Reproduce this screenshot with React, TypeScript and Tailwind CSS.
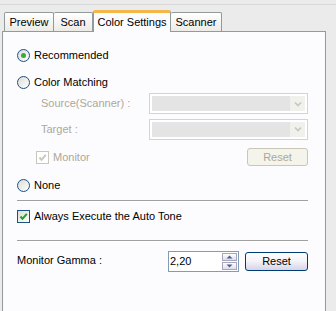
import React from "react";

function Radio({ checked, label }: { checked?: boolean; label: string }) {
  return (
    <div className="flex items-center h-[16px]">
      <span className="w-[13px] h-[13px] rounded-full border border-[#1c5180] bg-gradient-to-br from-[#dcdcd6] to-white flex items-center justify-center">
        {checked && <span className="w-[5px] h-[5px] rounded-full bg-[#3ea83e]" />}
      </span>
      <span className="ml-[4px] text-black">{label}</span>
    </div>
  );
}

function Check({ disabled, label }: { disabled?: boolean; label: string }) {
  return (
    <div className="flex items-center h-[16px]">
      <span
        className={
          disabled
            ? "w-[13px] h-[13px] border border-[#cac8bb] bg-white flex items-center justify-center"
            : "w-[13px] h-[13px] border border-[#1c5180] bg-gradient-to-br from-[#dcdcd6] to-white flex items-center justify-center"
        }
      >
        <svg width="9" height="9" viewBox="0 0 9 9">
          <path
            d="M1.5 4.5 L3.5 6.8 L7.8 1.8"
            fill="none"
            stroke={disabled ? "#cac8bb" : "#21a121"}
            strokeWidth="2"
          />
        </svg>
      </span>
      <span className={disabled ? "ml-[4px] text-[#aca899]" : "ml-[4px] text-black"}>{label}</span>
    </div>
  );
}

function Combo() {
  return (
    <div className="w-[159px] h-[21px] border border-[#d6d4c9] bg-white p-[2px] flex">
      <div className="flex-1 bg-[#e4e4e4]" />
      <div className="w-[15px] bg-[#f0f0ec] flex items-center justify-center">
        <svg width="8" height="6" viewBox="0 0 8 6">
          <path d="M1 1.5 L4 4.5 L7 1.5" fill="none" stroke="#c9c7ba" strokeWidth="1.6" />
        </svg>
      </div>
    </div>
  );
}

const tab =
  "h-[19px] flex items-center justify-center border border-b-0 border-[#919b9c] rounded-t-[2px] bg-gradient-to-b from-white to-[#ecebe6]";

export default function App() {
  return (
    <div
      className="w-[336px] h-[311px] bg-[#ebebeb] overflow-hidden text-[11px] leading-none"
      style={{ fontFamily: "'Liberation Sans', Arial, sans-serif" }}
    >
      <div className="h-[27px] border-t border-[#d8d8d8] mt-[4px] flex items-end pl-[4px]">
        <div className={tab + " w-[50px]"}>Preview</div>
        <div className={tab + " w-[39px] border-l-0"}>Scan</div>
        <div className="w-[78px] h-[22px] flex items-center justify-center border-x border-[#919b9c] border-t-[3px] border-t-[#f3b74a] bg-[#fcfcfe] -mb-px relative z-10 rounded-t-[2px]">
          Color Settings
        </div>
        <div className={tab + " w-[51px] border-l-0"}>Scanner</div>
      </div>
      <div className="ml-[2px] w-[324px] h-[281px] border border-[#919b9c] bg-[#fcfcfe] pl-[14px] pr-[17px] pt-[15px] flex flex-col">
        <Radio checked label="Recommended" />
        <div className="mt-[11px]">
          <Radio label="Color Matching" />
        </div>
        <div className="mt-[3px] flex items-center h-[21px]">
          <span className="ml-[24px] text-[#aca899]">Source(Scanner) :</span>
          <div className="ml-auto">
            <Combo />
          </div>
        </div>
        <div className="mt-[4px] flex items-center h-[22px]">
          <span className="ml-[24px] text-[#aca899]">Target :</span>
          <div className="ml-auto">
            <Combo />
          </div>
        </div>
        <div className="mt-[8px] flex items-center h-[18px]">
          <div className="ml-[19px]">
            <Check disabled label="Monitor" />
          </div>
          <div className="ml-auto w-[61px] h-[18px] border border-[#c9c7ba] rounded-[3px] bg-[#f5f4ea] text-[#aca899] flex items-center justify-center">
            Reset
          </div>
        </div>
        <div className="mt-[11px]">
          <Radio label="None" />
        </div>
        <div className="mt-[7px] h-px bg-[#a0a0a0] border-b border-white box-content" />
        <div className="mt-[6px]">
          <Check label="Always Execute the Auto Tone" />
        </div>
        <div className="mt-[16px] h-px bg-[#a0a0a0] border-b border-white box-content" />
        <div className="mt-[9px] flex items-center h-[21px]">
          <span className="mt-[-2px]">Monitor Gamma :</span>
          <div className="ml-auto flex items-center">
            <div className="w-[71px] h-[21px] border border-[#7f9db9] bg-white flex items-center">
              <span className="pl-[1px] flex-1">2,20</span>
              <div className="w-[15px] h-[17px] mr-[1px] flex flex-col gap-px">
                <div className="flex-1 border border-[#a6a6bd] bg-gradient-to-b from-white to-[#dcdcf0] flex items-center justify-center">
                  <svg width="7" height="4" viewBox="0 0 7 4">
                    <path d="M0.5 3.5 L3.5 0.5 L6.5 3.5 Z" fill="#4d6185" />
                  </svg>
                </div>
                <div className="flex-1 border border-[#a6a6bd] bg-gradient-to-b from-white to-[#dcdcf0] flex items-center justify-center">
                  <svg width="7" height="4" viewBox="0 0 7 4">
                    <path d="M0.5 0.5 L3.5 3.5 L6.5 0.5 Z" fill="#4d6185" />
                  </svg>
                </div>
              </div>
            </div>
            <div className="ml-[6px] w-[63px] h-[19px] border border-[#003c74] rounded-[3px] bg-gradient-to-b from-white via-[#f2f2f8] to-[#d6d3e8] flex items-center justify-center text-black">
              Reset
            </div>
          </div>
        </div>
      </div>
    </div>
  );
}
